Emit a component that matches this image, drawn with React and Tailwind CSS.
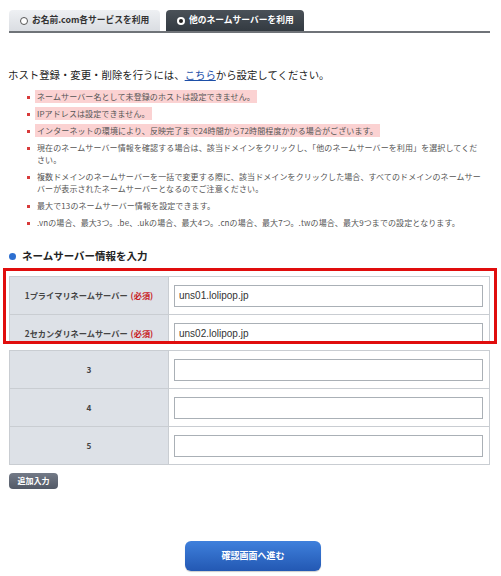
import React from 'react';

const jp = { fontFamily: '"Noto Sans CJK JP", "Noto Sans", sans-serif' };

function Tab({ label, active }) {
  return (
    <div
      className={
        active
          ? 'flex items-center gap-[4px] h-[21px] w-[138px] pl-[11px] rounded-t-[4px] bg-gradient-to-b from-[#4a5158] to-[#333a41] text-white'
          : 'flex items-center gap-[4px] h-[21px] w-[151px] pl-[11px] rounded-t-[4px] bg-gradient-to-b from-[#eef0f3] to-[#dadde2] text-[#333]'
      }
    >
      {active ? (
        <span className="w-[8px] h-[8px] rounded-full bg-white flex items-center justify-center">
          <span className="w-[4px] h-[4px] rounded-full bg-[#222]" />
        </span>
      ) : (
        <span className="w-[8px] h-[8px] rounded-full border border-[#555] bg-white" />
      )}
      <span className="text-[8.75px] font-bold leading-none">{label}</span>
    </div>
  );
}

function Note({ children, hl }) {
  return (
    <li className="flex items-start leading-[12px]">
      <span className="w-[3px] h-[3px] bg-[#d83a3a] mt-[5px] ml-[27px] mr-[7px] shrink-0" />
      <span className="text-[8px] text-[#555] whitespace-nowrap tracking-[0.1px]">
        {hl ? <span className="bg-[#fbd2d2] px-[2px] py-[1px] -ml-[2px]">{children}</span> : children}
      </span>
    </li>
  );
}

function Row({ label, value }) {
  return (
    <div className="flex h-[38px] border-b border-[#c9cdd2]">
      <div className="w-[159px] shrink-0 bg-[#dde1e7] border-r border-[#c9cdd2] flex items-center justify-center text-[8.2px] font-bold text-[#444]">
        {label}
      </div>
      <div className="flex-1 bg-white flex items-center px-[5px]">
        <div className="w-[309px] h-[22px] border border-[#aab0b6] bg-white flex items-center pl-[4px] text-[10px] text-[#333]" style={{ fontFamily: '"Liberation Sans", Arial, sans-serif' }}>
          {value}
        </div>
      </div>
    </div>
  );
}

const req = <span className="text-[#c8201f] ml-[3px]">(必須)</span>;

export default function App() {
  return (
    <div className="w-[501px] h-[576px] bg-white overflow-hidden" style={jp}>
      <div className="pt-[10px] pl-[9px]">
        <div className="flex gap-[6px]">
          <Tab label="お名前.com各サービスを利用" />
          <Tab label="他のネームサーバーを利用" active />
        </div>
        <div className="w-[481px] h-[2px] bg-[#6f7378]" />
      </div>

      <p className="mt-[35px] ml-[8px] text-[10.4px] leading-[14px] text-[#222]">
        ホスト登録・変更・削除を行うには、<span className="text-[#1d4fa8] underline">こちら</span>から設定してください。
      </p>

      <ul className="mt-[9px] flex flex-col gap-[5px]">
        <Note hl>ネームサーバー名として未登録のホストは設定できません。</Note>
        <Note hl>IPアドレスは設定できません。</Note>
        <Note hl>インターネットの環境により、反映完了まで24時間から72時間程度かかる場合がございます。</Note>
        <Note>
          現在のネームサーバー情報を確認する場合は、該当ドメインをクリックし、「他のネームサーバーを利用」を選択してくだ
          <br />
          さい。
        </Note>
        <Note>
          複数ドメインのネームサーバーを一括で変更する際に、該当ドメインをクリックした場合、すべてのドメインのネームサー
          <br />
          バーが表示されたネームサーバーとなるのでご注意ください。
        </Note>
        <Note>最大で13のネームサーバー情報を設定できます。</Note>
        <Note>.vnの場合、最大3つ。.be、.ukの場合、最大4つ。.cnの場合、最大7つ。.twの場合、最大9つまでの設定となります。</Note>
      </ul>

      <h2 className="mt-[20px] ml-[9px] flex items-center gap-[6px] text-[10.5px] font-bold leading-[14px] text-[#222]">
        <span className="w-[7px] h-[7px] rounded-full bg-[#2d6fd0]" />
        ネームサーバー情報を入力
      </h2>

      <div className="mt-[5px] ml-[3px] w-[494px] h-[76px] border-[3px] border-[#e00d0d] overflow-hidden pt-[5px] pl-[3px]">
        <div className="w-[481px] border-t border-x border-[#c9cdd2]">
          <Row label={<span>1プライマリネームサーバー{req}</span>} value="uns01.lolipop.jp" />
          <Row label={<span>2セカンダリネームサーバー{req}</span>} value="uns02.lolipop.jp" />
        </div>
      </div>

      <div className="mt-[6px] ml-[9px] w-[481px] border-t border-x border-[#c9cdd2]">
        <Row label="3" value="" />
        <Row label="4" value="" />
        <Row label="5" value="" />
      </div>

      <button className="mt-[8px] ml-[9px] w-[49px] h-[16px] rounded-[4px] bg-gradient-to-b from-[#737a87] to-[#525966] text-white text-[8px] font-bold leading-none flex items-center justify-center">
        追加入力
      </button>

      <button className="mt-[52px] ml-[185px] w-[136px] h-[30px] rounded-[6px] bg-gradient-to-b from-[#3f80dc] to-[#2358b3] text-white text-[9px] font-bold flex items-center justify-center shadow-[0_1px_1px_rgba(0,0,0,0.2)]">
        確認画面へ進む
      </button>
    </div>
  );
}
